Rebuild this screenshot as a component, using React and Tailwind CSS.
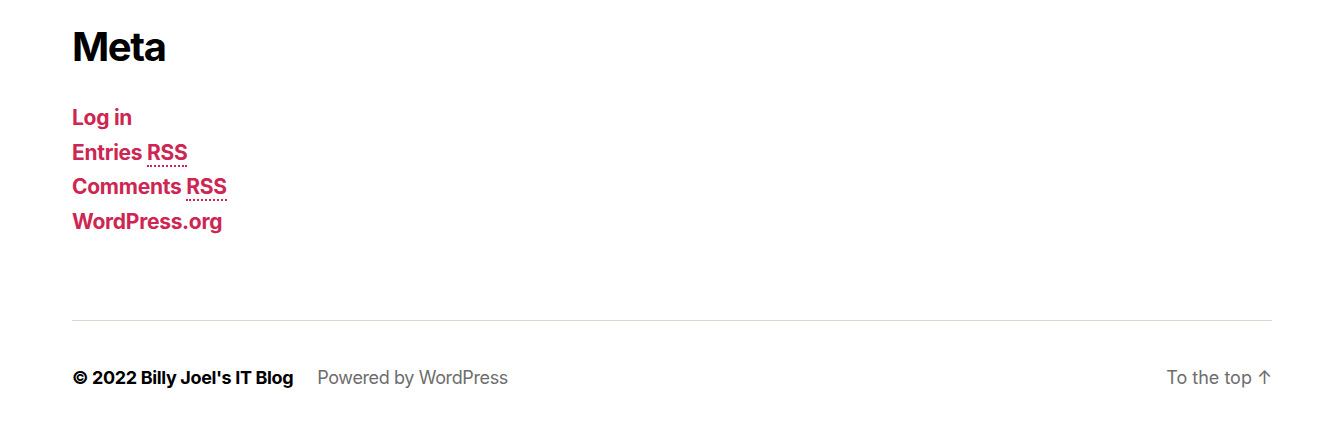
export default function App() {
  const links = [
    { label: 'Log in' },
    { label: 'Entries', abbr: 'RSS' },
    { label: 'Comments', abbr: 'RSS' },
    { label: 'WordPress.org' },
  ]

  return (
    <div className="min-h-[425px] bg-white font-['Inter',sans-serif] text-black">
      <div className="ml-[72px] w-[1200px] pt-[22px]">
        <h2 className="text-[40px] leading-[1.25] font-bold tracking-[-0.035em]">Meta</h2>
        <ul className="mt-[29px]">
          {links.map((link) => (
            <li key={link.label + (link.abbr || '')} className="text-[21px] leading-[34.7px] font-bold tracking-[-0.013em] text-[#cd2653]">
              <a href="#">
                {link.label}
                {link.abbr && (
                  <>
                    {' '}
                    <abbr className="no-underline border-b-2 border-dotted border-[#cd2653]">{link.abbr}</abbr>
                  </>
                )}
              </a>
            </li>
          ))}
        </ul>
      </div>

      <footer className="ml-[72px] w-[1200px] mt-[80px] border-t border-[#dcd7ca] pt-[43px]">
        <div className="flex items-center justify-between text-[18px] leading-[27px]">
          <div className="flex items-center gap-[24px]">
            <p className="font-bold tracking-[-0.02em]">© 2022 <a href="#">Billy Joel's IT Blog</a></p>
            <p className="text-[#6d6d6d] tracking-[-0.021em]">
              <a href="#">Powered by WordPress</a>
            </p>
          </div>
          <a href="#" className="text-[#6d6d6d]">
            To the top <span>↑</span>
          </a>
        </div>
      </footer>
    </div>
  )
}
